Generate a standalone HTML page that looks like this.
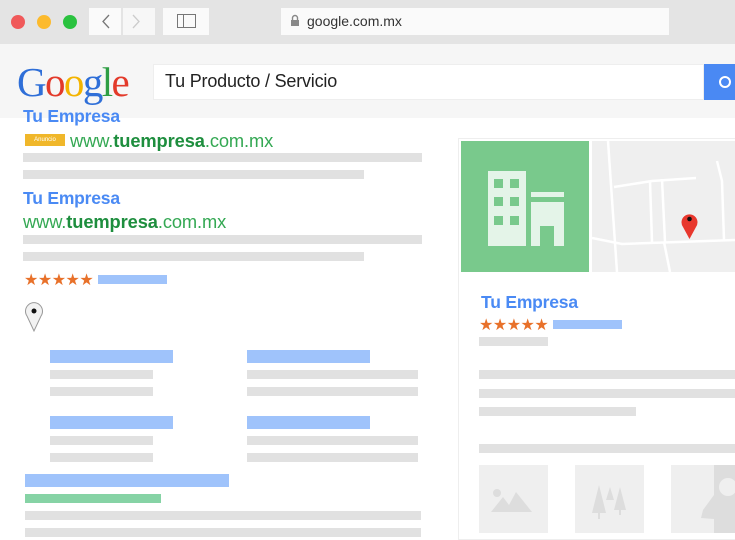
<!DOCTYPE html>
<html><head><meta charset="utf-8"><style>
*{margin:0;padding:0;box-sizing:border-box}
body{width:735px;height:537px;overflow:hidden;background:#fff;position:relative;font-family:"Liberation Sans",sans-serif}
.a{position:absolute}
.g{position:absolute;background:#e1e1e1}
.b{position:absolute;background:#9fc3fb}
.t{position:absolute;color:#4a8af4;font-weight:bold;font-size:17.5px;letter-spacing:-0.2px}
.u{position:absolute;color:#34a853;font-size:18.3px;letter-spacing:-0.1px}
.u b{color:#1e8e3e}
.st{position:absolute;color:#e8712a;font-size:16px;letter-spacing:-0.5px}
</style></head><body>
<div class="a" style="left:0;top:0;width:735px;height:44px;background:#e4e4e4"></div>
<div class="a" style="left:11px;top:15px;width:14px;height:14px;border-radius:50%;background:#f0595a"></div>
<div class="a" style="left:37px;top:15px;width:14px;height:14px;border-radius:50%;background:#fcba2d"></div>
<div class="a" style="left:63px;top:15px;width:14px;height:14px;border-radius:50%;background:#2ac23f"></div>
<div class="a" style="left:89px;top:8px;width:32px;height:27px;background:#fafafa"></div>
<div class="a" style="left:123px;top:8px;width:32px;height:27px;background:#f7f7f7"></div>
<svg class="a" style="left:89px;top:8px" width="66" height="27"><path d="M20 7 L14 13.5 L20 20" stroke="#777" stroke-width="1.3" fill="none"/><path d="M44 7 L50 13.5 L44 20" stroke="#ccc" stroke-width="1.3" fill="none"/></svg>
<div class="a" style="left:163px;top:8px;width:46px;height:27px;background:#fafafa"></div>
<svg class="a" style="left:177px;top:14px" width="19" height="15"><rect x="0.5" y="0.5" width="18" height="13" fill="none" stroke="#777"/><line x1="6.5" y1="1" x2="6.5" y2="14" stroke="#777"/></svg>
<div class="a" style="left:281px;top:8px;width:388px;height:27px;background:#fafafa"></div>
<svg class="a" style="left:290px;top:14px" width="10" height="13"><path d="M2.5 6V4a2.5 2.5 0 0 1 5 0v2" stroke="#888" stroke-width="1.4" fill="none"/><rect x="1" y="6" width="8" height="6" fill="#888"/></svg>
<div class="a" style="left:307px;top:13px;font-size:14px;color:#333">google.com.mx</div>
<div class="a" style="left:0;top:44px;width:735px;height:74px;background:#f6f6f6"></div>
<div class="a" style="left:17px;top:58px;font-family:'Liberation Serif',serif;font-size:41px;letter-spacing:-1.6px;line-height:48px"><span style="color:#2f6fd8">G</span><span style="color:#e33a2a">o</span><span style="color:#f4b400">o</span><span style="color:#2f6fd8">g</span><span style="color:#2e9e44">l</span><span style="color:#e33a2a">e</span></div>
<div class="a" style="left:153px;top:64px;width:551px;height:36px;background:#fff;border:1px solid #eee"></div>
<div class="a" style="left:165px;top:71px;font-size:18px;color:#222;letter-spacing:-0.2px">Tu Producto / Servicio</div>
<div class="a" style="left:704px;top:64px;width:31px;height:36px;background:#4a89f3"></div>
<div class="a" style="left:719px;top:76px;width:12px;height:12px;border-radius:50%;border:2px solid #fff"></div>
<div class="t" style="left:23px;top:106px">Tu Empresa</div>
<div class="a" style="left:25px;top:134px;width:40px;height:12px;background:#f0b72a;color:#fff;font-size:6px;line-height:12px;text-align:center">Anuncio</div>
<div class="u" style="left:70px;top:130px">www.<b>tuempresa</b>.com.mx</div>
<div class="g" style="left:23px;top:153px;width:399px;height:9px"></div>
<div class="g" style="left:23px;top:170px;width:341px;height:9px"></div>
<div class="t" style="left:23px;top:188px">Tu Empresa</div>
<div class="u" style="left:23px;top:211px">www.<b>tuempresa</b>.com.mx</div>
<div class="g" style="left:23px;top:235px;width:399px;height:9px"></div>
<div class="g" style="left:23px;top:252px;width:341px;height:9px"></div>
<div class="st" style="left:24px;top:270px">★★★★★</div>
<div class="b" style="left:98px;top:275px;width:69px;height:9px"></div>
<svg class="a" style="left:24px;top:301px" width="20" height="32"><path d="M10 30 L3 15 A8.5 8.5 0 1 1 17 15 Z" fill="#f2f2f2" stroke="#999"/><circle cx="10" cy="10" r="2.5" fill="#111"/></svg>
<div class="b" style="left:50px;top:350px;width:123px;height:13px"></div>
<div class="g" style="left:50px;top:370px;width:103px;height:9px"></div>
<div class="g" style="left:50px;top:387px;width:103px;height:9px"></div>
<div class="b" style="left:247px;top:350px;width:123px;height:13px"></div>
<div class="g" style="left:247px;top:370px;width:171px;height:9px"></div>
<div class="g" style="left:247px;top:387px;width:171px;height:9px"></div>
<div class="b" style="left:50px;top:416px;width:123px;height:13px"></div>
<div class="g" style="left:50px;top:436px;width:103px;height:9px"></div>
<div class="g" style="left:50px;top:453px;width:103px;height:9px"></div>
<div class="b" style="left:247px;top:416px;width:123px;height:13px"></div>
<div class="g" style="left:247px;top:436px;width:171px;height:9px"></div>
<div class="g" style="left:247px;top:453px;width:171px;height:9px"></div>
<div class="b" style="left:25px;top:474px;width:204px;height:13px"></div>
<div class="a" style="left:25px;top:494px;width:136px;height:9px;background:#86d3a5"></div>
<div class="g" style="left:25px;top:511px;width:396px;height:9px"></div>
<div class="g" style="left:25px;top:528px;width:396px;height:9px"></div>
<div class="a" style="left:458px;top:138px;width:280px;height:402px;border:1px solid #eee;background:#fff"></div>
<div class="a" style="left:461px;top:141px;width:128px;height:131px;background:#79c98c"></div>
<svg class="a" style="left:461px;top:141px" width="128" height="131"><rect x="27" y="30" width="38" height="75" fill="#e4f4e8"/><g fill="#79c98c"><rect x="33" y="38" width="9" height="9"/><rect x="49" y="38" width="9" height="9"/><rect x="33" y="56" width="9" height="9"/><rect x="49" y="56" width="9" height="9"/><rect x="33" y="75" width="9" height="9"/><rect x="49" y="75" width="9" height="9"/></g><rect x="70" y="51" width="33" height="5" fill="#e4f4e8"/><rect x="70" y="61" width="33" height="44" fill="#e4f4e8"/><rect x="79" y="85" width="14" height="20" fill="#79c98c"/></svg>
<div class="a" style="left:592px;top:141px;width:143px;height:131px;background:#efefef"></div>
<svg class="a" style="left:592px;top:141px" width="143" height="131" fill="none" stroke="#fff" stroke-width="2.5"><path d="M16 0 L25 131"/><path d="M0 97 L30 103 L143 99"/><path d="M22 46 L60 40 L104 37"/><path d="M58 40 L60 101"/><path d="M70 38 L73 101"/><path d="M72 101 L78 131"/><path d="M125 20 L130 40 L132 99"/></svg>
<svg class="a" style="left:680px;top:210px" width="20" height="30"><path d="M9.5 29 L3 17 A8 8 0 1 1 16 17 Z" fill="#e8372d"/><circle cx="9.5" cy="9" r="2.3" fill="#111"/></svg>
<div class="t" style="left:481px;top:292px">Tu Empresa</div>
<div class="st" style="left:479px;top:315px">★★★★★</div>
<div class="b" style="left:553px;top:320px;width:69px;height:9px"></div>
<div class="g" style="left:479px;top:337px;width:69px;height:9px"></div>
<div class="g" style="left:479px;top:370px;width:256px;height:9px"></div>
<div class="g" style="left:479px;top:389px;width:256px;height:9px"></div>
<div class="g" style="left:479px;top:407px;width:157px;height:9px"></div>
<div class="g" style="left:479px;top:444px;width:256px;height:9px"></div>
<div class="a" style="left:479px;top:465px;width:69px;height:68px;background:#efefef"></div>
<svg class="a" style="left:479px;top:465px" width="69" height="68" fill="#ddd"><circle cx="18" cy="28" r="4"/><path d="M12 47 L24 32 L30 40 L37 27 L53 47Z"/></svg>
<div class="a" style="left:575px;top:465px;width:69px;height:68px;background:#efefef"></div>
<svg class="a" style="left:575px;top:465px" width="69" height="68" fill="#ddd"><path d="M24 20 L17 48 L31 48Z"/><path d="M35 22 L31 35 L39 35Z"/><path d="M45 22 L39 45 L51 45Z"/><rect x="23" y="46" width="2" height="8"/><rect x="44" y="44" width="2" height="6"/></svg>
<div class="a" style="left:671px;top:465px;width:64px;height:68px;background:#efefef"></div>
<svg class="a" style="left:671px;top:465px" width="64" height="68"><rect x="43" y="0" width="21" height="68" fill="#ddd"/><path d="M43 30 L32 45 L30 53 L43 54Z" fill="#ddd"/><circle cx="57" cy="22" r="9" fill="#efefef"/></svg>
</body></html>
